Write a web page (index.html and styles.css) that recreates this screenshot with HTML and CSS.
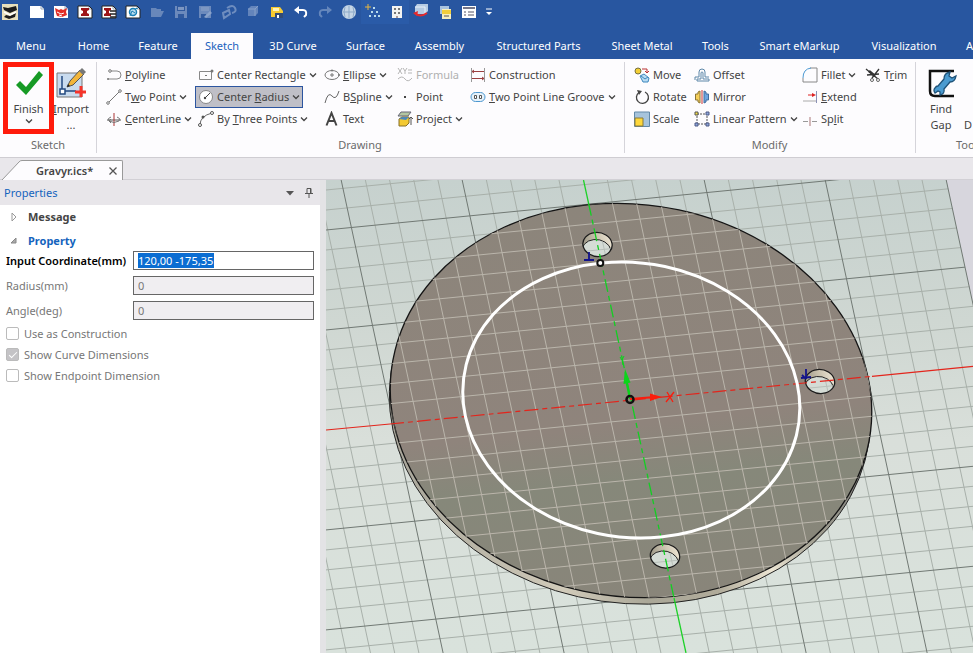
FILE: index.html
```html
<!DOCTYPE html>
<html lang="en">
<head>
<meta charset="utf-8">
<title>Gravyr.ics</title>
<link rel="stylesheet" href="styles.css">
</head>
<body>
<svg class="defs" aria-hidden="true">
  <symbol id="chev" viewBox="0 0 8 8"><path d="M1 2.5l3 3 3-3" fill="none" stroke="#444" stroke-width="1.3"/></symbol>
  <symbol id="sheet" viewBox="0 0 16 16"><path d="M1 2h11l3 3v9H1z" fill="#fff"/><path d="M12 2v3h3" fill="none" stroke="#9ab"/></symbol>
</svg>

<header class="top">
  <div class="quick">
    <button class="app" aria-label="Application"><svg viewBox="0 0 16 16"><path fill="#e8e0bd" d="M0 0h16v16H0z"/><path d="M1 3l5 1 8-2 1 4-7 3-6-3zM4 11l4 1 6-3-1 4-6 2-5-2z" fill="#1c1c1c"/><path d="M2 8l6 3 6-3" stroke="#fff" stroke-width="1.500" fill="none"/></svg></button>
    <button aria-label="New"><svg viewBox="0 0 16 16"><use href="#sheet"/></svg></button>
    <button aria-label="New scene"><svg viewBox="0 0 16 16"><use href="#sheet"/><path d="M2 4l4 2 2-1 2 1 4-2-1 4 1 3-5 2-5-1-1-3z" fill="#e22d26"/><path d="M4 8l4 2 3-1M6 11l3 1" stroke="#fff" fill="none"/></svg></button>
    <button aria-label="New part"><svg viewBox="0 0 16 16"><use href="#sheet"/><path d="M1 2h11l3 3v9H1z" fill="none" stroke="#222"/><path d="M4 4h8v2l-2 1v2l2 1v2H4v-2l2-1V7L4 6z" fill="#9e1518"/></svg></button>
    <button aria-label="New drawing"><svg viewBox="0 0 16 16"><use href="#sheet"/><path d="M1 2h11l3 3v9H1z" fill="none" stroke="#222"/><path d="M3 4h7v2L8 7v2l2 1v2H3v-2l2-1V7L3 6z" fill="#9e1518"/><path d="M9 7h6M9 10h6M9 13h6" stroke="#222" stroke-width="1.5"/></svg></button>
    <button aria-label="New sheet"><svg viewBox="0 0 16 16"><use href="#sheet"/><path d="M1 2h11l3 3v9H1z" fill="none" stroke="#222"/><circle cx="8" cy="8" r="3.5" fill="#b9ddf0" stroke="#1a7fb5" stroke-width="1.5"/><path d="M10 5l3-1M5 12l2-5 3 2" stroke="#1a7fb5" fill="none"/></svg></button>
    <button aria-label="Open" class="dim"><svg viewBox="0 0 16 16"><path d="M2 4h5l1 1h4v2h3l-3 6H2z" fill="#93a9cc"/></svg></button>
    <button aria-label="Save" class="dim"><svg viewBox="0 0 16 16"><path d="M2 2h12v12H2z" fill="#9aaed0"/><path d="M4 2h8v5H4zM5 10h6v4H5z" fill="#365c9c"/><path d="M5 3h6v3H5z" fill="#b6c3da"/></svg></button>
    <button aria-label="Save as" class="dim"><svg viewBox="0 0 16 16"><path d="M2 2h12v12H2z" fill="#9aaed0"/><path d="M4 10h5v4H4z" fill="#365c9c"/><path d="M4 3h8v4H4z" fill="#b6c3da"/><path d="M7 13l6-6 2 2-6 5z" fill="#cad5e6"/></svg></button>
    <button aria-label="Link" class="dim"><svg viewBox="0 0 16 16"><path d="M6 4q6-4 8 0t-3 5M2 9l6-3 1 4-6 4z" fill="none" stroke="#9db2d4" stroke-width="2"/></svg></button>
    <button aria-label="Part" class="dim"><svg viewBox="0 0 16 16"><path d="M3 5l3-3h7v7l-3 3H3z" fill="#8ba4cd"/><path d="M3 5h7v7M10 5l3-3" fill="none" stroke="#c7d3e6"/></svg></button>
    <button aria-label="Print"><svg viewBox="0 0 16 16"><path d="M2 3h9l3 4v6H2z" fill="#f7cb33"/><path d="M4 4h6v3H4z" fill="#fff3b8"/><path d="M6 9h8v5H6z" fill="#334b74"/><path d="M8 11h2v3H8z" fill="#fff"/></svg></button>
    <button aria-label="Undo"><svg viewBox="0 0 16 16"><path d="M2 6h8q4 0 3 5l-2 2" fill="none" stroke="#fff" stroke-width="2"/><path d="M6 2L1 6l5 4z" fill="#fff"/></svg></button>
    <button aria-label="Redo" class="dim"><svg viewBox="0 0 16 16"><path d="M14 6H6q-4 0-3 5l2 2" fill="none" stroke="#8fa8d0" stroke-width="2"/><path d="M10 2l5 4-5 4z" fill="#8fa8d0"/></svg></button>
    <button aria-label="Globe"><svg viewBox="0 0 16 16"><circle cx="8" cy="8" r="7" fill="#c6d6e6"/><path d="M1.500 8h13M8 1.500v13M4 3q-2 5 0 10M12 3q2 5 0 10" fill="none" stroke="#8daac9"/></svg></button>
    <button aria-label="Snap" class="lit"><svg viewBox="0 0 16 16"><path d="M8 3h2v2H8zM6 7h2v2H6zM11 7h2v2h-2zM4 11h2v2H4zM9 11h2v2H9zM13 11h2v2h-2z" fill="#b9dced"/><path d="M3 0v6M0 3h6" stroke="#e5b540"/></svg></button>
    <button aria-label="Building" class="lit"><svg viewBox="0 0 16 16"><path d="M3 2h10v12H3z" fill="#f3f3f1"/><path d="M5 4h2v2H5zM9 4h2v2H9zM5 8h2v2H5zM9 8h2v2H9z" fill="#777"/><path d="M7 12h2v2H7z" fill="#a99"/></svg></button>
    <button aria-label="Refresh"><svg viewBox="0 0 16 16"><path d="M4 0h11v7l-3 3H2V3z" fill="#b7cce4"/><path d="M2 3h10v7" fill="none" stroke="#e9f1fa"/><path d="M2 9q5 5 12 0" fill="none" stroke="#e52a2d" stroke-width="2"/><path d="M0 9l5-2-1 5z" fill="#e52a2d"/></svg></button>
    <button aria-label="Layers"><svg viewBox="0 0 16 16"><path d="M3 2h9v8H3z" fill="#a8c3df"/><path d="M5 5h9v10H5z" fill="#f6efc0"/><path d="M5 6h9v4H5z" fill="#f1ce3c"/><path d="M7 12h5" stroke="#555"/></svg></button>
    <button aria-label="List"><svg viewBox="0 0 16 16"><path d="M1 2h14v12H1z" fill="#fff"/><path d="M2 4h12" stroke="#778" stroke-width="2"/><path d="M3 8h2M3 11h2M7 8h6M7 11h6" stroke="#556"/></svg></button>
    <button class="more" aria-label="More"><svg viewBox="0 0 8 8"><path d="M1 1h6" stroke="#fff"/><path d="M1 4h6L4 7z" fill="#fff"/></svg></button>
  </div>
  <nav class="tabs">
    <a href="#">Menu</a><a href="#">Home</a><a href="#">Feature</a><a href="#" class="on">Sketch</a><a href="#">3D Curve</a><a href="#">Surface</a><a href="#">Assembly</a><a href="#">Structured Parts</a><a href="#">Sheet Metal</a><a href="#">Tools</a><a href="#">Smart eMarkup</a><a href="#">Visualization</a><a href="#" class="cut">A</a>
  </nav>
</header>

<section class="ribbon">
  <div class="group g-sketch">
    <div class="bigs">
      <button class="big finish"><svg class="ico" viewBox="0 0 32 32"><path d="M3 18l4-4 6 6L26 4l4 4-17 20z" fill="#179a25"/></svg><span>Finish</span><svg class="chev"><use href="#chev"/></svg></button>
      <button class="big import"><svg class="ico" viewBox="0 0 32 32"><path d="M2 6h25v24H2z" fill="#c9dbee" stroke="#777"/><path d="M7 9v15h14" fill="none" stroke="#234a80" stroke-width="1.5"/><path d="M5 22h5v5H5z" fill="#fff" stroke="#234a80" stroke-width="1.500"/><path d="M12 20l3-6L25 3l4 4-11 11z" fill="#f2b53a" stroke="#555"/><path d="M24 4l3-3 4 4-3 3z" fill="#777"/><path d="M12 20l1-3 2 2z" fill="#222"/><path d="M26 19v11M20 25h11" stroke="#f5342a" stroke-width="3"/></svg><span><u>I</u>mport</span><span>...</span></button>
    </div>
    <div class="name">Sketch</div>
  </div>

  <div class="group g-drawing">
    <div class="cols">
      <div class="col">
        <button class="cmd"><svg viewBox="0 0 16 16"><path d="M2 12h9q4 0 4-4t-4-4H5" fill="none" stroke="#888"/><circle cx="4" cy="4" r="1.300" fill="#fff" stroke="#777"/><circle cx="2" cy="12" r="1" fill="#777"/></svg><span><u>P</u>olyline</span></button>
        <button class="cmd"><svg viewBox="0 0 16 16"><path d="M2 14L14 2" stroke="#777"/><circle cx="2" cy="14" r="1.300" fill="#fff" stroke="#777"/><circle cx="14" cy="2" r="1.300" fill="#fff" stroke="#777"/></svg><span>T<u>w</u>o Point</span><svg class="chev"><use href="#chev"/></svg></button>
        <button class="cmd"><svg viewBox="0 0 16 16"><path d="M1 9h14" stroke="#555"/><path d="M8 2v13" stroke="#a33"/><path d="M5 6Q1 7 3 10q5 3 10 0 2-3-2-4M5 12l-2-2 2-2" fill="none" stroke="#777"/></svg><span><u>C</u>enterLine</span><svg class="chev"><use href="#chev"/></svg></button>
      </div>
      <div class="col">
        <button class="cmd"><svg viewBox="0 0 16 16"><path d="M1.500 4.500h12v8h-12z" fill="none" stroke="#888"/><circle cx="14" cy="4" r="1.500" fill="#777"/><path d="M7 8h2v1H7z" fill="#777"/></svg><span>Center Rectangle</span><svg class="chev"><use href="#chev"/></svg></button>
        <button class="cmd active"><svg viewBox="0 0 16 16"><circle cx="8" cy="8" r="6.500" fill="#fff" stroke="#888"/><path d="M7 9l5-5" stroke="#444"/><circle cx="7" cy="9" r="1.200" fill="#444"/></svg><span>Center <u>R</u>adius</span><svg class="chev"><use href="#chev"/></svg></button>
        <button class="cmd"><svg viewBox="0 0 16 16"><path d="M2 14Q2 5 14 2" fill="none" stroke="#666"/><circle cx="2" cy="14" r="1.500" fill="#fff" stroke="#555"/><circle cx="5" cy="6" r="1.500" fill="#555"/><circle cx="14" cy="2" r="1.500" fill="#fff" stroke="#555"/></svg><span>By <u>T</u>hree Points</span><svg class="chev"><use href="#chev"/></svg></button>
      </div>
      <div class="col">
        <button class="cmd"><svg viewBox="0 0 16 16"><ellipse cx="8" cy="8" rx="7" ry="4.500" fill="none" stroke="#777"/><path d="M8 6v4M6 8h4" stroke="#777"/><circle cx="8" cy="3.500" r="1" fill="#777"/><circle cx="15" cy="8" r="1" fill="#777"/></svg><span><u>E</u>llipse</span><svg class="chev"><use href="#chev"/></svg></button>
        <button class="cmd"><svg viewBox="0 0 16 16"><path d="M1 14Q4 2 8 7t7-5" fill="none" stroke="#666"/></svg><span>B<u>S</u>pline</span><svg class="chev"><use href="#chev"/></svg></button>
        <button class="cmd"><svg viewBox="0 0 16 16"><path d="M2.500 14.500L7.500 2l5 12.500M4.500 10h6" fill="none" stroke="#444" stroke-width="2"/></svg><span>Text</span></button>
      </div>
      <div class="col">
        <button class="cmd off" disabled><svg viewBox="0 0 16 16"><path d="M1 1l4 6M5 1L1 7M6 1l2 3 2-3M8 4v3M11 3h4M11 6h4M1 12q4-4 7 0t7-1" fill="none" stroke="#b5b5b5"/></svg><span>Formula</span></button>
        <button class="cmd"><svg viewBox="0 0 16 16"><path d="M7 7h2v2H7z" fill="#444"/></svg><span>Point</span></button>
        <button class="cmd"><svg viewBox="0 0 16 16"><path d="M4 1h10l-3 4H1z" fill="#b3c6a2" stroke="#667"/><path d="M2 8l3-2h7v6l-3 3H2z" fill="#f3c932" stroke="#86702b"/><path d="M2 8l3-2h7L9 9z" fill="#4c88b8"/><path d="M14 14V6M12 8l2-2 2 2" fill="none" stroke="#555"/></svg><span>Project</span><svg class="chev"><use href="#chev"/></svg></button>
      </div>
      <div class="col">
        <button class="cmd"><svg viewBox="0 0 16 16"><path d="M1.500 1v14M14.500 1v14" stroke="#999"/><path d="M2 4.500h12M2 11.500h12" stroke="#9b4040"/><path d="M4 3L2 4.500 4 6M12 10l2 1.500-2 1.500" fill="none" stroke="#9b4040"/></svg><span>Construction</span></button>
        <button class="cmd"><svg viewBox="0 0 16 16"><rect x="1" y="3.500" width="14" height="9" rx="4.500" fill="#e6f2fb" stroke="#4c97cf"/><path d="M4.500 6.500h2v3h-2zM9.500 6.500h2v3h-2z" fill="#fff" stroke="#555"/></svg><span><u>T</u>wo Point Line Groove</span><svg class="chev"><use href="#chev"/></svg></button>
      </div>
    </div>
    <div class="name">Drawing</div>
  </div>

  <div class="group g-modify">
    <div class="cols">
      <div class="col">
        <button class="cmd"><svg viewBox="0 0 16 16"><circle cx="4" cy="4" r="3" fill="#f4cf35" stroke="#77713f"/><path d="M8 2h5v3M11 4l2 2 2-2" fill="none" stroke="#b33"/><path d="M6 9l4-2 5 4-1 4H9z" fill="#b9dcf3" stroke="#3d87bd"/><path d="M7 9l4 3 3-2" fill="none" stroke="#3d87bd"/></svg><span>Move</span></button>
        <button class="cmd"><svg viewBox="0 0 16 16"><path d="M5 3.500A6 6 0 1 0 11 3" fill="none" stroke="#444" stroke-width="1.300"/><path d="M3 1l5 1-3 4z" fill="#444"/></svg><span>Rotate</span></button>
        <button class="cmd"><svg viewBox="0 0 16 16"><path d="M.5 1h15v14.500H.5z" fill="#a7c4dc" stroke="#6289a8"/><path d="M1 7h8v8H1z" fill="#ffd83b" stroke="#8b7b38"/></svg><span>Scale</span></button>
      </div>
      <div class="col">
        <button class="cmd"><svg viewBox="0 0 16 16"><path d="M1 13v-3h4V5q0-3 3-3t3 3v5h4M3 14v-2h4V6q0-1 1-1t1 1v6h6v2z" fill="none" stroke="#5d87a8"/></svg><span>Offset</span></button>
        <button class="cmd"><svg viewBox="0 0 16 16"><path d="M6 2v12l-2-1v-2H1.500V5H4V3z" fill="#f5cf5a" stroke="#8b7637"/><path d="M8 1v14" stroke="#c33"/><path d="M10 2v12l2-1v-2h2.500V5H12V3z" fill="#6da5e0" stroke="#416c9e"/></svg><span>Mirror</span></button>
        <button class="cmd"><svg viewBox="0 0 16 16"><path d="M3 3h10v10H3z" fill="none" stroke="#555" stroke-dasharray="2 1"/><path d="M1 1h3v3H1z" fill="#f1dc45" stroke="#555"/><path d="M12 1h3v3h-3zM1 12h3v3H1zM12 12h3v3h-3z" fill="#8ca5da" stroke="#4e5b86"/></svg><span>Linear Pattern</span><svg class="chev"><use href="#chev"/></svg></button>
      </div>
      <div class="col">
        <button class="cmd"><svg viewBox="0 0 16 16"><path d="M1 15V11M8 1h7v14H1" fill="none" stroke="#888"/><path d="M1 11Q1 2 9 1" fill="none" stroke="#4d9ad3"/></svg><span>Fillet</span><svg class="chev"><use href="#chev"/></svg></button>
        <button class="cmd"><svg viewBox="0 0 16 16"><path d="M1 12h13" stroke="#aaa"/><path d="M14.500 2v12" stroke="#8b91b5"/><path d="M6 6h6" stroke="#d22"/><path d="M10 4l4 2-4 2z" fill="#d22"/></svg><span><u>E</u>xtend</span></button>
        <button class="cmd"><svg viewBox="0 0 16 16"><path d="M1 10.500h5M10 10.500h5" stroke="#999"/><path d="M8 6v9" stroke="#a77"/></svg><span>Sp<u>l</u>it</span></button>
      </div>
      <div class="col">
        <button class="cmd"><svg viewBox="0 0 16 16"><path d="M1 2l12 10M14 2L7 11M2 8l12-1" fill="none" stroke="#333" stroke-width="1.300"/><path d="M4 4l6 5" stroke="#333" stroke-width="2.500"/><circle cx="13" cy="13" r="1.500" fill="#fff" stroke="#666"/><circle cx="7" cy="13" r="1.500" fill="#fff" stroke="#666"/></svg><span>T<u>r</u>im</span></button>
      </div>
    </div>
    <div class="name">Modify</div>
  </div>

  <div class="group g-tools">
    <div class="bigs">
      <button class="big"><svg class="ico" viewBox="0 0 32 32"><path d="M29 4H5v20q0 5 5 5h19" fill="none" stroke="#111" stroke-width="2.500"/><path d="M10 21q-2 2 0 5l3-2 2 1v3q5-1 4-6l6-7q5 0 6-6l-4 2-3-2 1-4q-6 1-6 7l-6 7q-2 0-3 2z" fill="#4b9bd0" stroke="#1e5278" stroke-width="1.300"/></svg><span>Find</span><span>Gap</span></button>
      <button class="big cutbig"><span>D</span></button>
    </div>
    <div class="name">Tools</div>
  </div>
</section>

<div class="docs">
  <svg class="slant" viewBox="0 0 20 20"><path d="M0 20L17 2q1-1.500 3-1.500V20z" fill="#fdfcfe"/><path d="M0 20L17 2q1-1.500 3-1.500" fill="none" stroke="#999"/></svg>
  <div class="doc"><span>Gravyr.ics*</span><button aria-label="Close"><svg viewBox="0 0 8 8"><path d="M.5 .5l7 7M7.500 .5l-7 7" stroke="#555" stroke-width="1.300"/></svg></button></div>
</div>

<main class="work">
  <aside class="panel">
    <div class="head"><h2>Properties</h2>
      <button aria-label="Options"><svg viewBox="0 0 10 10"><path d="M1 3h8L5 7.500z" fill="#555"/></svg></button>
      <button aria-label="Pin"><svg viewBox="0 0 10 10"><path d="M3 .5h4v5H3zM1 5.500h8M5 6v4" fill="none" stroke="#555"/><path d="M6.500 1v4" stroke="#555"/></svg></button>
    </div>
    <h3><svg viewBox="0 0 10 10"><path d="M3 1l4 4-4 4z" fill="#fff" stroke="#999"/></svg>Message</h3>
    <h3 class="open"><svg viewBox="0 0 10 10"><path d="M7 2v5H2z" fill="#aaa" stroke="#888"/></svg>Property</h3>
    <form>
      <div class="field main"><label for="coord">Input Coordinate(mm)</label><input id="coord" type="text" value="120,00 -175,35"></div>
      <div class="field"><label for="rad">Radius(mm)</label><input id="rad" type="text" value="0" disabled></div>
      <div class="field"><label for="ang">Angle(deg)</label><input id="ang" type="text" value="0" disabled></div>
      <label class="check"><input type="checkbox" disabled>Use as Construction</label>
      <label class="check"><input type="checkbox" checked disabled>Show Curve Dimensions</label>
      <label class="check"><input type="checkbox" disabled>Show Endpoint Dimension</label>
    </form>
  </aside>
  <div class="view">
    <svg viewBox="326 180 647 473" preserveAspectRatio="xMinYMin slice" role="img" aria-label="Sketch view">
      <defs>
        <linearGradient id="bg" x1="0" y1="0" x2="0" y2="1"><stop offset="0" stop-color="#c6d1ce"/><stop offset=".3" stop-color="#cfd7d2"/><stop offset=".55" stop-color="#d9dfda"/><stop offset="1" stop-color="#d9e2dc"/></linearGradient>
        <linearGradient id="face" x1="0" y1="0" x2="0" y2="1"><stop offset="0" stop-color="#8c857b"/><stop offset=".56" stop-color="#8f847c"/><stop offset=".7" stop-color="#86887a"/><stop offset="1" stop-color="#89857a"/></linearGradient>
        <linearGradient id="side" x1="0" y1="0" x2="1" y2="0"><stop offset="0" stop-color="#aaa79b"/><stop offset=".28" stop-color="#d1cbba"/><stop offset=".45" stop-color="#aaa798"/><stop offset=".6" stop-color="#b0ab9a"/><stop offset=".72" stop-color="#ece5d3"/><stop offset=".82" stop-color="#a3a193"/><stop offset="1" stop-color="#777"/></linearGradient>
        <linearGradient id="wall" x1="0" y1="0" x2="1" y2="0"><stop offset="0" stop-color="#9a9585"/><stop offset=".5" stop-color="#c9c1ad"/><stop offset="1" stop-color="#ebe3d2"/></linearGradient>
        <g id="lines"><path d="M-14-20V20M-13-20V20M-12-20V20M-11-20V20M-9-20V20M-8-20V20M-7-20V20M-6-20V20M-4-20V20M-3-20V20M-2-20V20M-1-20V20M1-20V20M2-20V20M3-20V20M4-20V20M6-20V20M7-20V20M8-20V20M9-20V20M11-20V20M12-20V20M13-20V20M14-20V20M-20-14H15M-20-13H15M-20-12H15M-20-11H15M-20-9H15M-20-8H15M-20-7H15M-20-6H15M-20-4H15M-20-3H15M-20-2H15M-20-1H15M-20 1H15M-20 2H15M-20 3H15M-20 4H15M-20 6H15M-20 7H15M-20 8H15M-20 9H15M-20 11H15M-20 12H15M-20 13H15M-20 14H15" vector-effect="non-scaling-stroke"/></g>
        <g id="majors"><path d="M-15-20V20M-10-20V20M-5-20V20M5-20V20M10-20V20M15-20V20M-20-10H15M-20-5H15M-20 5H15M-20 10H15M-20 15H15" vector-effect="non-scaling-stroke"/></g>
        <clipPath id="disc"><circle r="10" transform="matrix(23.7 -2.33 4.22 19.58 631 400.500)"/></clipPath>
        <clipPath id="holeclip"><circle r=".61" transform="matrix(23.7 -2.33 4.22 19.58 0 0)"/></clipPath>
        <g id="hole">
          <circle r=".61" transform="matrix(23.7 -2.33 4.22 19.58 0 0)" fill="url(#wall)"/>
          <g clip-path="url(#holeclip)"><circle r=".61" transform="matrix(23.7 -2.33 4.22 19.58 -1 7)" fill="#d5dcd6" stroke="#222" vector-effect="non-scaling-stroke"/><path d="M-15 7l30-3M5-3l4 18" stroke="#b8bfb9"/></g>
          <circle r=".61" transform="matrix(23.7 -2.33 4.22 19.58 0 0)" fill="none" stroke="#1c1c1c" stroke-width="1.300" vector-effect="non-scaling-stroke"/>
        </g>
      </defs>
      <path d="M0 0h1600v1200H0z" fill="#d7d6dd"/>
      <path d="M326 180H946.500L1048.500 653H326z" fill="url(#bg)"/>
      <g transform="matrix(23.7 -2.33 4.22 19.58 630.600 400)" fill="none"><use href="#lines" stroke="#a8b0aa"/><use href="#majors" stroke="#717974"/></g>
      <circle r="10" transform="matrix(23.7 -2.33 4.22 19.58 630 407)" fill="url(#side)" stroke="#222" vector-effect="non-scaling-stroke"/>
      <circle r="10" transform="matrix(23.7 -2.33 4.22 19.58 631 400.500)" fill="url(#face)" stroke="#151515" stroke-width="1.300" vector-effect="non-scaling-stroke"/>
      <g clip-path="url(#disc)"><g transform="matrix(23.7 -2.33 4.22 19.58 630.600 400)" fill="none" stroke="#bab5ab"><use href="#lines"/><use href="#majors"/></g></g>
      <use href="#hole" x="597.500" y="244.500"/>
      <use href="#hole" x="820" y="381.500"/>
      <use href="#hole" x="665" y="556"/>
      <path d="M326 430L390 424M872 376.300L973 366.300" stroke="#e3251c" stroke-width="1.200"/>
      <path d="M390 424L872 376.300" stroke="#e3251c" stroke-width="1.200" stroke-dasharray="14 4 5 4"/>
      <path d="M583.500 180L588.500 203M674 598L686 653" stroke="#1fd12a" stroke-width="1.300"/>
      <path d="M588.500 203L674 598" stroke="#12cf22" stroke-width="1.300" stroke-dasharray="13 4 5 4"/>
      <circle r="7" transform="matrix(23.7 -2.33 4.22 19.58 631.300 400)" fill="none" stroke="#fff" stroke-width="3" vector-effect="non-scaling-stroke"/>
      <path d="M630 399L626 380" stroke="#0bd51a" stroke-width="2"/><path d="M625 369l-1.500 15 7-1.500z" fill="#0bd51a"/><path d="M620 357l2 3 2-4M622 360l1 5" fill="none" stroke="#0bd51a"/>
      <path d="M630 399l22-1.800" stroke="#fb1c0c" stroke-width="2"/><path d="M650 393.500l12 3.500-12 4z" fill="#fb1c0c"/><path d="M667 392l6 10M674 392l-8 10" stroke="#fb1c0c" stroke-width="1.300"/>
      <circle cx="630" cy="399.500" r="3.500" fill="none" stroke="#111" stroke-width="2.500"/>
      <circle cx="600.300" cy="263" r="3" fill="#fff" stroke="#111" stroke-width="2"/>
      <path d="M584 260h10M589 252v8M806 369v10M801 378l10-1M802 375l4 4" fill="none" stroke="#13138c" stroke-width="1.800"/>
    </svg>
  </div>
</main>
</body>
</html>
```
FILE: styles.css
```css
* { box-sizing: border-box; }
html, body { height: 100%; }
body {
  margin: 0;
  display: flex;
  flex-direction: column;
  overflow: hidden;
  font: 11px/16px "Noto Sans", "Open Sans", sans-serif;
  color: #444;
  background: #fdfcfe;
}
button, input { font: inherit; color: inherit; }
button { border: 0; padding: 0; background: none; }
.defs { position: absolute; width: 0; height: 0; }

/* title area */
.top { background: #2856a0; color: #fff; flex: none; }
.quick { display: flex; height: 33px; padding-bottom: 9px; }
.quick button { flex: none; width: 24px; display: grid; place-items: center; }
.quick svg { width: 16px; height: 16px; }
.quick .app { width: 25px; padding: 0 7px 0 2px; }
.quick .more { width: 16px; }
.quick .more svg { width: 8px; height: 8px; }
.quick .dim { opacity: .6; }
.quick .lit { background: #2a5ba8; }
.tabs {
  display: grid;
  grid-template-columns: 62px 63px 66px 62px 80px 65px 83px 115px 92px 55px 113px 96px 1fr;
  height: 26px;
}
.tabs a { color: #fff; text-decoration: none; text-align: center; line-height: 26px; white-space: nowrap; }
.tabs .on { background: #fdfcfe; color: #1a62bd; }
.tabs .cut { text-align: left; padding-left: 14px; overflow: hidden; }

/* ribbon */
.ribbon {
  display: grid;
  grid-template-columns: 96px 528px 291px 1fr;
  height: 99px;
  flex: none;
  border-bottom: 1px solid #cfcdd2;
  overflow: hidden;
}
.group { display: flex; flex-direction: column; position: relative; min-width: 0; padding-top: 3px; }
.group + .group::before { content: ""; position: absolute; left: 0; top: 3px; bottom: 4px; width: 1px; background: #d5d4da; }
.name { text-align: center; color: #6b6b6b; line-height: 18px; }
.bigs { display: flex; height: 74px; padding-left: 3px; }
.big { display: flex; flex-direction: column; align-items: center; width: 34px; padding-top: 5px; }
.big .ico { width: 32px; height: 32px; flex: none; margin-bottom: 2px; }
.finish { width: 51px; height: 72px; padding-top: 0; border: 5px solid #ff1b0b; position: relative; z-index: 1; }
.cols { display: grid; height: 74px; padding: 2px 0 0 7px; }
.g-drawing .cols { grid-template-columns: 92px 126px 73px 73px 1fr; }
.g-modify .cols { grid-template-columns: 60px 108px 63px 1fr; }
.col { display: flex; flex-direction: column; align-items: flex-start; }
.cmd { display: flex; align-items: center; gap: 3px; height: 22px; padding: 0 3px; white-space: nowrap; }
.cmd > svg { width: 16px; height: 16px; flex: none; }
.cmd .chev, .big .chev { width: 8px; height: 8px; flex: none; }
.cmd.active { width: 108px; background: #bfbfc7; box-shadow: inset 0 0 0 1px #2c55a0; }
.cmd.off { color: #b0b0b0; }
.g-tools .bigs { padding-left: 10px; gap: 7px; }
.cutbig { padding-top: 55px; align-items: flex-start; }
.g-tools .name { text-align: left; padding-left: 41px; }

/* document tabs */
.docs { display: flex; flex: none; height: 22px; padding: 2px 0 0 2px; background: #e9e7eb; border-bottom: 1px solid #d2d0d5; }
.slant { width: 20px; height: 20px; }
.doc {
  display: flex;
  align-items: center;
  justify-content: space-between;
  width: 101px;
  height: 20px;
  padding: 0 5px 0 14px;
  background: #fdfcfe;
  border-top: 1px solid #999;
  border-right: 1px solid #999;
  border-radius: 0 2px 0 0;
  font-weight: 600;
}
.doc svg { width: 8px; height: 8px; display: block; }

/* workspace */
.work { display: grid; grid-template-columns: 320px 1fr; flex: 1; min-height: 0; }
.panel { background: #fff; }
.head { display: flex; align-items: center; gap: 9px; height: 25px; padding: 0 6px 0 4px; background: #e8e6ea; }
.head h2 { flex: 1; margin: 0; font-size: 11px; font-weight: 400; color: #1463bd; }
.head svg { width: 10px; height: 10px; display: block; }
.panel h3 { display: flex; align-items: center; gap: 9px; height: 24px; margin: 0; padding-left: 9px; font-size: 11px; font-weight: 700; }
.panel h3 svg { width: 10px; height: 10px; }
.panel .open { color: #1463bd; }
.panel form { margin-top: -5px; }
.field { display: flex; align-items: center; height: 25px; padding: 0 6px; color: #777; }
.field label { width: 127px; white-space: nowrap; }
.field input { flex: 1; min-width: 0; height: 19px; padding: 0 4px; border: 1px solid #666; border-radius: 0; background: #f0eef1; }
.main label { color: #000; font-weight: 600; }
.main input { color: #fff; background: linear-gradient(#0b6dd2, #0b6dd2) 4px 1px / 76px 15px no-repeat #fff; }
.check { display: flex; align-items: center; gap: 5px; height: 21px; padding-left: 6px; color: #777; }
.check input { appearance: none; width: 13px; height: 13px; margin: 0; border: 1px solid #bbb; border-radius: 2px; background: #fff; }
.check input:checked { background: #c4c3c6; }
.check input:checked::before { content: ""; display: block; width: 7px; height: 3px; margin: 3px 0 0 2px; border: solid #fff; border-width: 0 0 1px 1px; transform: rotate(-45deg); }
.view { min-width: 0; border-left: 6px solid #e3e3e5; overflow: hidden; }
.view svg { width: 100%; height: 100%; display: block; }
```
